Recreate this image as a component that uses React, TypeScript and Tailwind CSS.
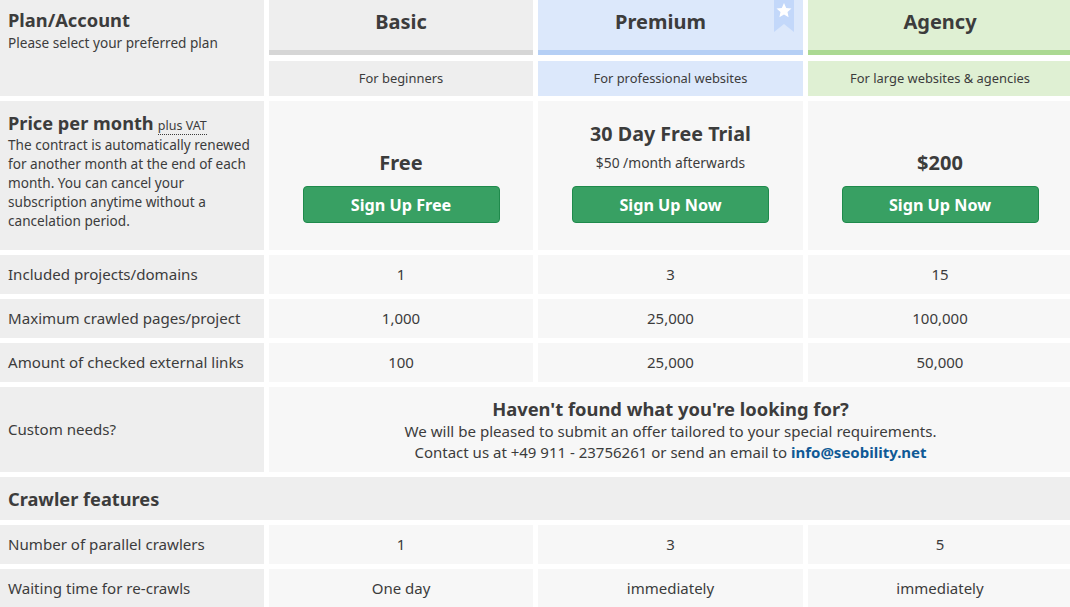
import React from "react";

const labelCell = "bg-[#eeeeee] px-2 flex items-center text-[15.1px]";
const valueCell = "bg-[#f7f7f7] flex items-center justify-center text-[15px]";

const Row = ({ label, values }: { label: string; values: string[] }) => (
  <>
    <div className={labelCell}>{label}</div>
    {values.map((v, i) => (
      <div key={i} className={valueCell}>{v}</div>
    ))}
  </>
);

const SignUp = ({ text }: { text: string }) => (
  <button className="w-[197px] h-[37px] pt-[2px] rounded-[4px] bg-[#38a063] border border-[#1f8a4c] text-white font-bold text-[16.2px] flex items-center justify-center">
    {text}
  </button>
);

export default function App() {
  return (
    <div className="w-[1070px] h-[607px] overflow-hidden bg-white text-[#3c3c3c] font-['Noto_Sans',sans-serif]">
      <div className="grid w-[1072px] grid-cols-[264px_264px_265px_264px] gap-[5px] grid-rows-[56px_35px_149px_39px_39px_39px_85px_43px_39px_39px]">
        {/* Plan header */}
        <div className="row-span-2 bg-[#eeeeee] px-2 pt-[8px]">
          <div className="text-[18.3px] font-bold leading-[24px]">Plan/Account</div>
          <div className="text-[13.6px] leading-[22px]">Please select your preferred plan</div>
        </div>
        <div className="mb-px bg-[#eeeeee] border-b-[5px] border-[#d6d6d6] flex items-center justify-center text-[20px] font-bold pb-[7px]">
          Basic
        </div>
        <div className="mb-px relative bg-[#dce8fb] border-b-[5px] border-[#b5cff5] flex items-center justify-center text-[20px] font-bold pb-[7px] pr-[20px]">
          Premium
          <svg className="absolute right-[9px] top-0" width="20" height="32" viewBox="0 0 20 32">
            <path d="M0 0H20V32L10 24L0 32Z" fill="#c3d8fa" />
            <path d="M10 3l2.2 4.9 5.3.6-4 3.6 1.1 5.2-4.6-2.7-4.6 2.7 1.1-5.2-4-3.6 5.3-.6Z" fill="#ffffff" />
          </svg>
        </div>
        <div className="mb-px bg-[#dff0d3] border-b-[5px] border-[#abd992] flex items-center justify-center text-[20px] font-bold pb-[7px]">
          Agency
        </div>

        <div className="bg-[#eeeeee] flex items-center justify-center text-[12.9px]">For beginners</div>
        <div className="bg-[#dce8fb] flex items-center justify-center text-[12.9px]">For professional websites</div>
        <div className="bg-[#dff0d3] flex items-center justify-center text-[12.9px]">For large websites &amp; agencies</div>

        {/* Price */}
        <div className="bg-[#eeeeee] px-2 pt-[10px]">
          <div className="leading-[24px]">
            <span className="text-[18.2px] font-bold">Price per month</span>{" "}
            <span className="text-[12.5px] border-b border-dotted border-[#3c3c3c]">plus VAT</span>
          </div>
          <div className="text-[13.6px] leading-[19px] -mt-[3px]">
            The contract is automatically renewed for another month at the end of each month. You can cancel your subscription anytime without a cancelation period.
          </div>
        </div>
        <div className="bg-[#f7f7f7] flex flex-col items-center">
          <div className="text-[20px] font-bold mt-[48px] leading-[28px]">Free</div>
          <div className="mt-[9px]"><SignUp text="Sign Up Free" /></div>
        </div>
        <div className="bg-[#f7f7f7] flex flex-col items-center">
          <div className="text-[19.7px] font-bold mt-[19px] leading-[28px]">30 Day Free Trial</div>
          <div className="text-[13.8px] mt-[5px] leading-[20px]">$50 /month afterwards</div>
          <div className="mt-[13px]"><SignUp text="Sign Up Now" /></div>
        </div>
        <div className="bg-[#f7f7f7] flex flex-col items-center">
          <div className="text-[20px] font-bold mt-[48px] leading-[28px]">$200</div>
          <div className="mt-[9px]"><SignUp text="Sign Up Now" /></div>
        </div>

        <Row label="Included projects/domains" values={["1", "3", "15"]} />
        <Row label="Maximum crawled pages/project" values={["1,000", "25,000", "100,000"]} />
        <Row label="Amount of checked external links" values={["100", "25,000", "50,000"]} />

        {/* Custom needs */}
        <div className={labelCell}>Custom needs?</div>
        <div className="col-span-3 bg-[#f7f7f7] flex flex-col items-center justify-center pt-[1px]">
          <div className="text-[18.35px] font-bold leading-[24px]">Haven't found what you're looking for?</div>
          <div className="text-[15.1px] leading-[21px]">We will be pleased to submit an offer tailored to your special requirements.</div>
          <div className="text-[15px] leading-[21px]">
            Contact us at +49 911 - 23756261 or send an email to <a className="font-bold text-[#0f5a96]">info@seobility.net</a>
          </div>
        </div>

        <div className="col-span-4 bg-[#eeeeee] px-2 pt-[2px] flex items-center text-[18.2px] font-bold">Crawler features</div>

        <Row label="Number of parallel crawlers" values={["1", "3", "5"]} />
        <Row label="Waiting time for re-crawls" values={["One day", "immediately", "immediately"]} />
      </div>
    </div>
  );
}
